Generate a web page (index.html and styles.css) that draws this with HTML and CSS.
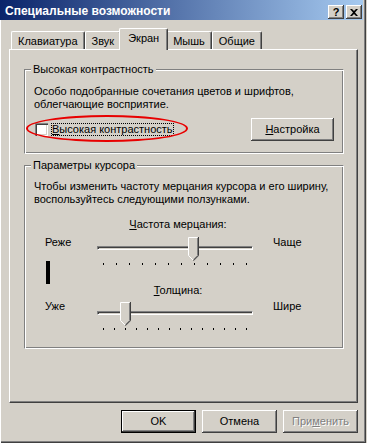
FILE: index.html
```html
<!DOCTYPE html>
<html lang="ru">
<head>
    <meta charset="UTF-8">
    <title>Специальные возможности</title>
    <link rel="stylesheet" href="styles.css">
</head>
<body>
    <div class="window">
        <div class="titlebar">
            <span class="title">Специальные возможности</span>
            <div class="caption-buttons">
                <span class="cap-btn">?</span>
                <span class="cap-btn">
                    <svg width="8" height="7" viewBox="0 0 8 7"><path d="M0 0h2l2 2 2-2h2L5 3.5 8 7H6L4 5 2 7H0l3-3.5z" fill="#000"/></svg>
                </span>
            </div>
        </div>

        <div class="tabs">
            <div class="tab">Клавиатура</div>
            <div class="tab">Звук</div>
            <div class="tab active">Экран</div>
            <div class="tab">Мышь</div>
            <div class="tab">Общие</div>
        </div>

        <div class="panel">
            <fieldset class="group group-contrast">
                <legend>Высокая контрастность</legend>
                <p class="desc">Особо подобранные сочетания цветов и шрифтов,<br>облегчающие восприятие.</p>
                <div class="check-row">
                    <label class="check">
                        <span class="checkbox"></span>
                        <span class="focus"><u>В</u>ысокая контрастность</span>
                    </label>
                    <button class="btn btn-setup"><u>Н</u>астройка</button>
                    <span class="ellipse"></span>
                </div>
            </fieldset>

            <fieldset class="group group-cursor">
                <legend>Параметры курсора</legend>
                <p class="desc">Чтобы изменить частоту мерцания курсора и его ширину,<br>воспользуйтесь следующими ползунками.</p>
                <div class="cursor-grid">
                    <div class="side-col">
                        <span class="side-top">Реже</span>
                        <span class="cursor-sample"></span>
                        <span class="side-bottom-left">Уже</span>
                    </div>
                    <div class="slider-col">
                        <span class="slider-caption"><u>Ч</u>астота мерцания:</span>
                        <div class="slider">
                            <div class="slider-track"></div>
                            <svg class="slider-thumb" style="left: 91px" width="11" height="24" viewBox="0 0 11 24">
                                <path d="M0 0H11V18.5L5.5 24L0 18.5Z" fill="#d4d0c8"/>
                                <path d="M0.5 18.5V0.5H9.5M0.5 18.5L5 23" stroke="#fff" fill="none"/>
                                <path d="M9.5 1V18.5L5.5 22.5" stroke="#808080" fill="none"/>
                                <path d="M10.5 0V18.7L5.5 23.7" stroke="#404040" fill="none"/>
                            </svg>
                        </div>
                        <div class="ticks">
                            <i></i><i></i><i></i><i></i><i></i><i></i><i></i><i></i><i></i><i></i><i></i><i></i>
                        </div>
                        <span class="slider-caption caption-second"><u>Т</u>олщина:</span>
                        <div class="slider slider-second">
                            <div class="slider-track"></div>
                            <svg class="slider-thumb" style="left: 23px" width="11" height="24" viewBox="0 0 11 24">
                                <path d="M0 0H11V18.5L5.5 24L0 18.5Z" fill="#d4d0c8"/>
                                <path d="M0.5 18.5V0.5H9.5M0.5 18.5L5 23" stroke="#fff" fill="none"/>
                                <path d="M9.5 1V18.5L5.5 22.5" stroke="#808080" fill="none"/>
                                <path d="M10.5 0V18.7L5.5 23.7" stroke="#404040" fill="none"/>
                            </svg>
                        </div>
                        <div class="ticks">
                            <i></i><i></i><i></i><i></i><i></i><i></i><i></i><i></i><i></i><i></i><i></i><i></i><i></i><i></i>
                        </div>
                    </div>
                    <div class="side-col side-right">
                        <span class="side-top">Чаще</span>
                        <span class="side-bottom-right">Шире</span>
                    </div>
                </div>
            </fieldset>
        </div>

        <div class="dialog-buttons">
            <button class="btn btn-default">OK</button>
            <button class="btn">Отмена</button>
            <button class="btn" disabled>При<u>м</u>енить</button>
        </div>
    </div>
</body>
</html>
```

FILE: styles.css
```css
* {
    box-sizing: border-box;
}
body {
    margin: 0;
    background: #d4d0c8;
    font: 11px/13px "Liberation Sans", Arial, sans-serif;
    color: #000;
}
.window {
    width: 366px;
    height: 443px;
    background: #d4d0c8;
    box-shadow: inset 1px 0 #fff, inset -1px -1px #404040, inset -2px -2px #808080;
    overflow: hidden;
}

/* title bar */
.titlebar {
    display: flex;
    align-items: flex-start;
    height: 20px;
    margin-right: 3px;
    padding-right: 1px;
    background: linear-gradient(to right, #0a246a, #a6caf0);
    color: #fff;
}
.title {
    font-weight: bold;
    font-size: 12px;
    line-height: 13px;
    padding: 5px 0 0 5px;
    white-space: nowrap;
}
.caption-buttons {
    display: flex;
    gap: 2px;
    margin-left: auto;
    padding-top: 5px;
}
.cap-btn {
    display: flex;
    align-items: center;
    justify-content: center;
    width: 16px;
    height: 14px;
    background: #d4d0c8;
    box-shadow: inset -1px -1px #404040, inset 1px 1px #fff, inset -2px -2px #808080;
    color: #000;
    font-weight: bold;
    font-size: 11px;
    line-height: 11px;
}

/* tabs */
.tabs {
    display: flex;
    align-items: flex-end;
    height: 21px;
    margin: 8px 0 0 9px;
    padding-left: 2px;
}
.tab {
    height: 18px;
    padding: 3px 6px 0;
    border: 1px solid #fff;
    border-bottom: 0;
    border-right-color: #404040;
    border-radius: 2px 2px 0 0;
    box-shadow: inset -1px 0 #808080;
    white-space: nowrap;
}
.tab.active {
    position: relative;
    z-index: 1;
    height: 22px;
    margin: 0 -2px -1px;
    padding: 3px 8px 0;
    background: #d4d0c8;
}

.panel {
    width: 349px;
    height: 354px;
    margin-left: 9px;
    padding: 13px 0 0 14px;
    border: 1px solid #fff;
    border-right-color: #404040;
    border-bottom-color: #404040;
    box-shadow: inset -1px -1px #808080;
}

/* group boxes */
.group {
    width: 320px;
    min-width: 0;
    margin: 0;
    padding: 9px 9px 12px;
    border: 1px solid #808080;
    border-right-color: #fff;
    border-bottom-color: #fff;
    box-shadow: inset 1px 1px #fff, inset -1px -1px #808080;
}
.group legend {
    margin-left: -3px;
    padding: 0 2px;
    background: #d4d0c8;
    line-height: 13px;
}
.group-cursor {
    margin-top: 5px;
    padding: 8px 9px 18px;
}
.desc {
    margin: 0;
    white-space: nowrap;
}

.check-row {
    position: relative;
    display: flex;
    align-items: center;
    height: 23px;
    margin-top: 7px;
}
.check {
    display: flex;
    align-items: center;
}
.checkbox {
    width: 13px;
    height: 13px;
    margin-left: 1px;
    background: #fff;
    box-shadow: inset 1px 1px #808080, inset 2px 2px #404040, inset -1px -1px #fff, inset -2px -2px #d4d0c8;
}
.focus {
    margin-left: 3px;
    border: 1px dotted #000;
    line-height: 11px;
    white-space: nowrap;
}
.ellipse {
    position: absolute;
    left: -8px;
    top: -3px;
    width: 162px;
    height: 27px;
    border: 2px solid #e80000;
    border-radius: 50%;
}

/* cursor sliders */
.cursor-grid {
    display: flex;
    margin: 12px 0 0 11px;
}
.side-col {
    display: flex;
    flex-direction: column;
    align-items: flex-start;
    width: 52px;
}
.side-right {
    width: auto;
    padding-left: 20px;
}
.side-top {
    margin-top: 18px;
}
.cursor-sample {
    width: 4px;
    height: 23px;
    margin: 12px 0 0 1px;
    background: #000;
}
.side-bottom-left {
    margin-top: 16px;
}
.side-bottom-right {
    margin-top: 51px;
}
.slider-col {
    display: flex;
    flex-direction: column;
    width: 156px;
}
.slider-caption {
    padding-left: 6px;
    text-align: center;
    white-space: nowrap;
}
.caption-second {
    margin-top: 19px;
}
.slider {
    position: relative;
    height: 24px;
    margin-top: 6px;
}
.slider-second {
    margin-top: 5px;
}
.slider-track {
    height: 4px;
    margin-top: 9px;
    border: 1px solid #808080;
    border-right-color: #fff;
    border-bottom-color: #fff;
    box-shadow: inset 1px 1px #404040;
}
.slider-thumb {
    position: absolute;
    top: 0;
}
.ticks {
    display: flex;
    justify-content: space-between;
    height: 2px;
    margin: 2px 6px 0;
}
.ticks i {
    width: 1px;
    height: 2px;
    background: #000;
}

/* buttons */
.dialog-buttons {
    display: flex;
    justify-content: flex-end;
    gap: 6px;
    width: 349px;
    margin: 7px 0 0 9px;
}
.btn {
    width: 75px;
    height: 23px;
    padding: 0;
    border: 0;
    background: #d4d0c8;
    box-shadow: inset -1px -1px #404040, inset 1px 1px #fff, inset -2px -2px #808080;
    font: inherit;
    color: #000;
}
.btn-setup {
    width: 83px;
    margin-left: auto;
}
.btn-default {
    box-shadow: inset 0 0 0 1px #000, inset -2px -2px #404040, inset 2px 2px #fff, inset -3px -3px #808080;
}
.btn:disabled {
    color: #808080;
    text-shadow: 1px 1px #fff;
}
```
